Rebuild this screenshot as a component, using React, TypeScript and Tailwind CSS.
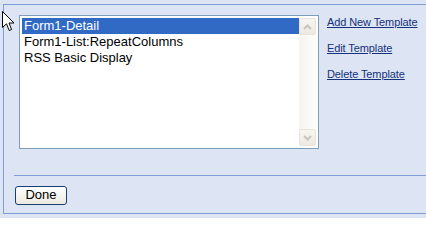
import React from 'react';

const TEMPLATES = ['Form1-Detail', 'Form1-List:RepeatColumns', 'RSS Basic Display'];
const LINKS = ['Add New Template', 'Edit Template', 'Delete Template'];

const ScrollButton: React.FC<{ down?: boolean }> = ({ down }) => (
  <div className="h-[17px] w-[17px] rounded-[2px] border border-[#e6e4dc] bg-gradient-to-b from-[#f7f6f1] to-[#ebe9e0] flex items-center justify-center">
    <svg width="9" height="6" viewBox="0 0 9 6" className={down ? 'rotate-180' : ''}>
      <path d="M1 5 L4.5 1.5 L8 5" fill="none" stroke="#c6c5bd" strokeWidth="2" />
    </svg>
  </div>
);

export default function App() {
  const selected = 0;

  return (
    <div className="relative w-[426px] h-[218px] overflow-hidden bg-[#dde5f4] font-['Liberation_Sans',Arial,sans-serif]">
      <div className="ml-[3px] mt-[4px] h-[210px] border-l border-t border-b border-[#7f9dd4] flex flex-col">
        {/* list + actions */}
        <div className="flex pl-[15px] pt-[10px]">
          <div className="w-[300px] h-[134px] border border-[#7f9db9] bg-white p-[2px] flex">
            <div className="flex-1 flex flex-col">
              {TEMPLATES.map((t, i) => (
                <div
                  key={t}
                  className={`h-[16px] leading-[16px] pl-[2px] text-[13px] whitespace-nowrap ${
                    i === selected ? 'bg-[#316ac5] text-white' : 'text-black'
                  }`}
                >
                  {t}
                </div>
              ))}
            </div>
            <div className="w-[17px] flex flex-col justify-between bg-gradient-to-r from-[#f5f4ef] to-[#fdfdfa]">
              <ScrollButton />
              <ScrollButton down />
            </div>
          </div>
          <div className="ml-[8px] pt-[1px] flex flex-col gap-[13px]">
            {LINKS.map(l => (
              <a
                key={l}
                href="#"
                className="text-[11px] leading-[13px] tracking-[-0.1px] text-[#15327a] underline whitespace-nowrap"
              >
                {l}
              </a>
            ))}
          </div>
        </div>

        <div className="ml-[10px] mt-[26px] border-t border-[#7f9dd4]" />

        <div className="ml-[11px] mt-[6px]">
          <button className="w-[52px] h-[19px] rounded-[3px] border border-[#1c3f6e] bg-gradient-to-b from-white to-[#ece9df] text-[13px] leading-[16px] text-black">
            Done
          </button>
        </div>
      </div>

      {/* mouse pointer */}
      <svg className="absolute left-[2px] top-[11px]" width="13" height="21" viewBox="0 0 13 21">
        <path
          d="M0.5 0.5 L0.5 16.5 L4.5 12.8 L7.2 19.5 L9.6 18.5 L7 12 L12 12 Z"
          fill="white"
          stroke="black"
          strokeWidth="1"
          strokeLinejoin="miter"
        />
      </svg>
    </div>
  );
}
